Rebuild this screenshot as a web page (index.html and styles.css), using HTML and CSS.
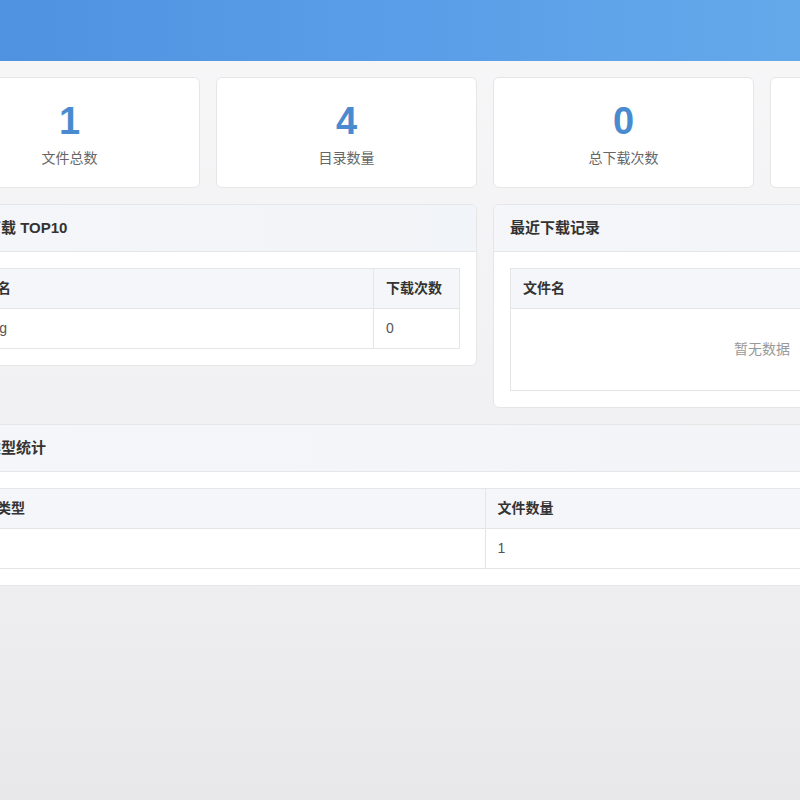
FILE: index.html
```html
<!DOCTYPE html>
<html lang="zh-CN">
<head>
  <meta charset="UTF-8">
  <meta name="viewport" content="width=device-width, initial-scale=1.0">
  <title>下载统计</title>
  <link rel="stylesheet" href="styles.css">
</head>
<body>
  <div class="top-bar"></div>

  <div class="stats-page">
    <div class="stat-cards">
      <div class="stat-card">
        <div class="stat-number">1</div>
        <div class="stat-label">文件总数</div>
      </div>
      <div class="stat-card">
        <div class="stat-number">4</div>
        <div class="stat-label">目录数量</div>
      </div>
      <div class="stat-card">
        <div class="stat-number">0</div>
        <div class="stat-label">总下载次数</div>
      </div>
      <div class="stat-card">
        <div class="stat-number">0</div>
        <div class="stat-label">今日下载</div>
      </div>
    </div>

    <div class="panel-row">
      <div class="panel">
        <div class="panel-header">热门下载 TOP10</div>
        <div class="panel-body">
          <table class="data-table">
            <thead>
              <tr><th>文件名</th><th class="col-count">下载次数</th></tr>
            </thead>
            <tbody>
              <tr><td>01.jpg</td><td>0</td></tr>
            </tbody>
          </table>
        </div>
      </div>

      <div class="panel">
        <div class="panel-header">最近下载记录</div>
        <div class="panel-body">
          <table class="data-table">
            <thead>
              <tr><th>文件名</th><th class="col-time">下载时间</th></tr>
            </thead>
            <tbody>
              <tr><td colspan="2" class="empty-cell">暂无数据</td></tr>
            </tbody>
          </table>
        </div>
      </div>
    </div>

    <div class="panel">
      <div class="panel-header">文件类型统计</div>
      <div class="panel-body">
        <table class="data-table half-cols">
          <thead>
            <tr><th>文件类型</th><th>文件数量</th></tr>
          </thead>
          <tbody>
            <tr><td>jpg</td><td>1</td></tr>
          </tbody>
        </table>
      </div>
    </div>
  </div>
</body>
</html>
```

FILE: styles.css
```css
html, body {
  height: 100%;
}
body {
  margin: 0;
  overflow: hidden;
  font-family: "Liberation Sans", "Noto Sans CJK SC", sans-serif;
  font-size: 14px;
  color: #333;
  background: linear-gradient(180deg, #f7f7f8 0%, #efeef1 70%, #e8e7ea 100%);
}
.top-bar {
  height: 61px;
  background: linear-gradient(90deg, #4f93e0 0%, #5a9de8 50%, #64a9ea 100%);
}
.stats-page {
  width: 1092px;
  margin-left: -61px;
  padding-top: 16px;
}
.stat-cards {
  display: grid;
  grid-template-columns: repeat(4, 1fr);
  gap: 16px;
  margin-bottom: 16px;
}
.stat-card {
  background: #fff;
  border: 1px solid #e6e6e6;
  border-radius: 6px;
  padding: 20px 16px 18px;
  text-align: center;
}
.stat-number {
  font-size: 38px;
  font-weight: bold;
  line-height: 46px;
  color: #4a8bd0;
  margin-bottom: 4px;
}
.stat-label {
  line-height: 21px;
  color: #666;
}
.panel-row {
  display: grid;
  grid-template-columns: 1fr 1fr;
  gap: 16px;
  align-items: start;
  margin-bottom: 16px;
}
.panel {
  background: #fff;
  border: 1px solid #e6e6e6;
  border-radius: 6px;
  overflow: hidden;
}
.panel-header {
  padding: 14px 16px;
  font-size: 15px;
  font-weight: bold;
  line-height: 18px;
  background: linear-gradient(90deg, #f5f6f9, #f1f4f8);
  border-bottom: 1px solid #e6e6e6;
}
.panel-body {
  padding: 16px;
}
.data-table {
  width: 100%;
  border-collapse: collapse;
}
.data-table th,
.data-table td {
  border: 1px solid #e3e5e8;
  padding: 10px 12px;
  line-height: 19px;
  text-align: left;
}
.data-table th {
  background: #f4f6f9;
  font-weight: bold;
  color: #333;
}
.data-table td {
  color: #555;
}
.col-count {
  width: 61px;
}
.col-time {
  width: 160px;
}
.half-cols th {
  width: 50%;
}
.data-table td.empty-cell {
  padding: 31px 12px;
  text-align: center;
  color: #999;
}
```
